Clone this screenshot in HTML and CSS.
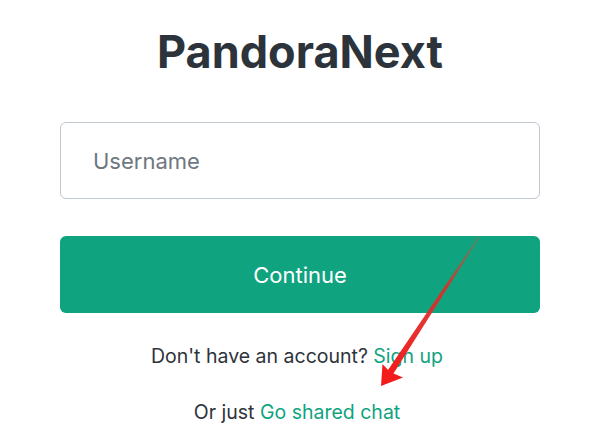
FILE: index.html
```html
<!DOCTYPE html>
<html lang="en">
<head>
<meta charset="utf-8">
<title>PandoraNext</title>
<link rel="stylesheet" href="styles.css">
</head>
<body>
<main class="page">
  <h1 class="title">PandoraNext</h1>
  <form class="form">
    <input class="field" type="text" placeholder="Username">
    <button class="btn" type="button">Continue</button>
  </form>
  <p class="line line-signup">Don't have an account? <a class="link" href="#">Sign up</a></p>
  <p class="line line-share">Or just <a class="link" href="#">Go shared chat</a></p>
  <svg class="arrow" width="594" height="444" viewBox="0 0 594 444" aria-hidden="true">
    <defs>
      <linearGradient id="shaft" x1="479" y1="237" x2="389" y2="373" gradientUnits="userSpaceOnUse">
        <stop offset="0" stop-color="#b85a40" stop-opacity="0.4"/>
        <stop offset="0.35" stop-color="#d8302a" stop-opacity="0.9"/>
        <stop offset="1" stop-color="#f21c1c"/>
      </linearGradient>
    </defs>
    <polygon points="478.4,236.6 479.6,237.4 392.5,375 387,371.5" fill="url(#shaft)"/>
    <polygon points="381,386 382.5,364 390,372 403,377.5" fill="#f21c1c"/>
  </svg>
</main>
</body>
</html>
```

FILE: styles.css
```css
* { box-sizing: border-box; }
html, body { margin: 0; padding: 0; background: #fff; }
body {
  font-family: Inter, "Noto Sans", "Liberation Sans", sans-serif;
  color: #2d333a;
}
.page {
  position: relative;
  width: 594px;
  height: 444px;
  display: flex;
  flex-direction: column;
  align-items: center;
  padding-top: 24px;
  padding-left: 6px;
}
.title {
  margin: 0;
  font-size: 45px;
  line-height: 56px;
  font-weight: 700;
  letter-spacing: 0;
  color: #2d333a;
}
.form {
  margin-top: 42px;
  width: 480px;
  display: flex;
  flex-direction: column;
  gap: 37px;
}
.field {
  width: 480px;
  height: 77px;
  border: 1px solid #c2c8d0;
  border-radius: 6px;
  padding: 0 0 0 32px;
  font-family: inherit;
  font-size: 22px;
  color: #2d333a;
  background: #fff;
  outline: none;
}
.field::placeholder { color: #6f7780; }
.btn {
  width: 480px;
  height: 77px;
  border: 0;
  border-radius: 6px;
  background: #10a37f;
  color: #fff;
  font-family: inherit;
  font-size: 22px;
  font-weight: 400;
}
.line {
  margin: 0 6px 0 0;
  font-size: 19.5px;
  line-height: 24px;
}
.line-signup { margin-top: 31px; }
.line-share { margin-top: 32px; }
.link { color: #10a37f; text-decoration: none; }
.arrow {
  position: absolute;
  left: 0;
  top: 0;
  pointer-events: none;
}
```
